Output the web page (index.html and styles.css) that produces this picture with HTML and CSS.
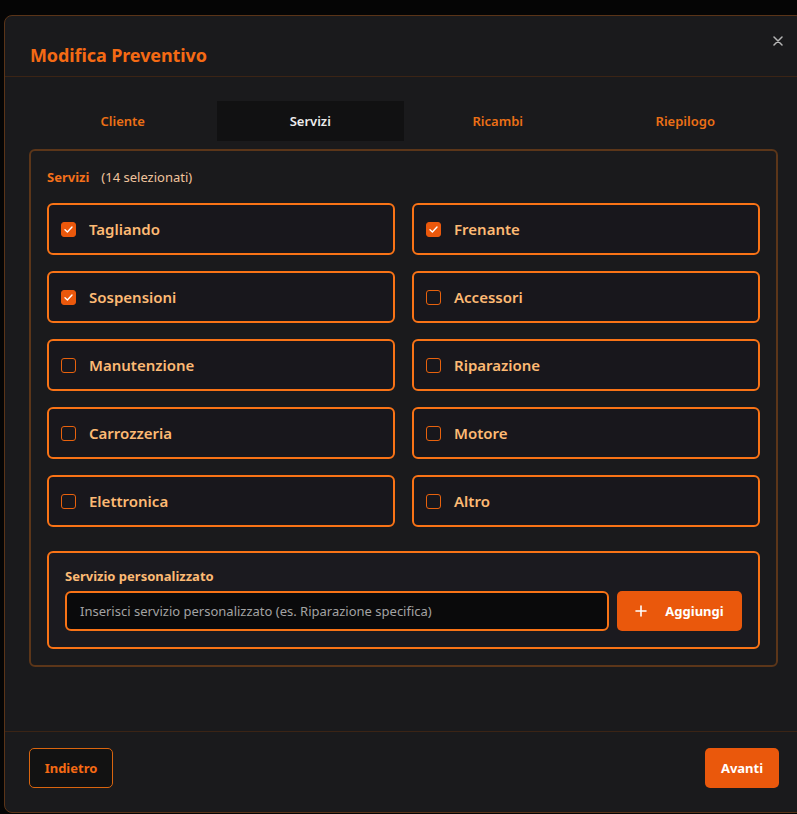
FILE: index.html
```html
<!DOCTYPE html>
<html lang="it">
<head>
<meta charset="utf-8">
<title>Modifica Preventivo</title>
<link rel="stylesheet" href="styles.css">
</head>
<body>
<div class="modal">
  <header class="modal-header">
    <h2 class="modal-title">Modifica Preventivo</h2>
    <button class="close-btn" aria-label="Chiudi">
      <svg width="10" height="10" viewBox="0 0 10 10"><path d="M1 1L9 9M9 1L1 9" stroke="#b5b5b5" stroke-width="1.5" stroke-linecap="round"/></svg>
    </button>
  </header>
  <div class="modal-body">
    <nav class="tabs">
      <div class="tab">Cliente</div>
      <div class="tab active">Servizi</div>
      <div class="tab">Ricambi</div>
      <div class="tab">Riepilogo</div>
    </nav>
    <section class="card">
      <div class="card-label"><span class="label-strong">Servizi</span><span class="label-count">(14 selezionati)</span></div>
      <div class="grid">
        <label class="item"><span class="cb checked"><svg width="11" height="11" viewBox="0 0 11 11"><path d="M2 5.8L4.4 8L9 3" fill="none" stroke="#fff" stroke-width="1.4" stroke-linecap="round" stroke-linejoin="round"/></svg></span>Tagliando</label>
        <label class="item"><span class="cb checked"><svg width="11" height="11" viewBox="0 0 11 11"><path d="M2 5.8L4.4 8L9 3" fill="none" stroke="#fff" stroke-width="1.4" stroke-linecap="round" stroke-linejoin="round"/></svg></span>Frenante</label>
        <label class="item"><span class="cb checked"><svg width="11" height="11" viewBox="0 0 11 11"><path d="M2 5.8L4.4 8L9 3" fill="none" stroke="#fff" stroke-width="1.4" stroke-linecap="round" stroke-linejoin="round"/></svg></span>Sospensioni</label>
        <label class="item"><span class="cb"></span>Accessori</label>
        <label class="item"><span class="cb"></span>Manutenzione</label>
        <label class="item"><span class="cb"></span>Riparazione</label>
        <label class="item"><span class="cb"></span>Carrozzeria</label>
        <label class="item"><span class="cb"></span>Motore</label>
        <label class="item"><span class="cb"></span>Elettronica</label>
        <label class="item"><span class="cb"></span>Altro</label>
      </div>
      <div class="custom">
        <div class="custom-label">Servizio personalizzato</div>
        <div class="custom-row">
          <div class="input">Inserisci servizio personalizzato (es. Riparazione specifica)</div>
          <button class="add-btn"><svg width="12" height="12" viewBox="0 0 12 12"><path d="M6 1V11M1 6H11" stroke="#fff" stroke-width="1.6" stroke-linecap="round"/></svg><span>Aggiungi</span></button>
        </div>
      </div>
    </section>
  </div>
  <footer class="modal-footer">
    <button class="btn-outline">Indietro</button>
    <button class="btn-primary">Avanti</button>
  </footer>
</div>
</body>
</html>
```
FILE: styles.css
```css
* { box-sizing: border-box; }
html, body { margin: 0; padding: 0; }
body {
  background: #050505;
  font-family: "Noto Sans", "Open Sans", sans-serif;
  overflow: hidden;
  height: 814px;
}
.modal {
  margin: 15px 0 0 4px;
  width: 800px;
  height: 798px;
  background: #1a1a1c;
  border: 1px solid #5a3418;
  border-radius: 8px;
  display: flex;
  flex-direction: column;
}
.modal-header {
  height: 61px;
  border-bottom: 1px solid #3b2415;
  display: flex;
  align-items: center;
  justify-content: space-between;
  padding: 0 20px 0 25px;
  position: relative;
}
.modal-title {
  margin: 0;
  margin-top: 17px;
  font-size: 18px;
  font-weight: 700;
  color: #f56a14;
  letter-spacing: -0.1px;
}
.close-btn {
  background: none;
  border: 0;
  padding: 0;
  width: 10px;
  height: 10px;
  align-self: flex-start;
  margin-top: 20px;
  display: flex;
}
.modal-body {
  flex: 1;
  padding: 24px 20px 0 24px;
}
.tabs {
  display: grid;
  grid-template-columns: repeat(4, 1fr);
  height: 40px;
  width: 750px;
}
.tab {
  display: flex;
  align-items: center;
  justify-content: center;
  font-size: 13px;
  font-weight: 600;
  color: #ec7016;
}
.tab.active {
  background: #111112;
  color: #ececec;
}
.card {
  margin-top: 8px;
  width: 749px;
  border: 2px solid #5c3619;
  border-radius: 6px;
  padding: 16px;
}
.card-label {
  height: 20px;
  display: flex;
  align-items: center;
  font-size: 13px;
}
.label-strong { color: #f4701a; font-weight: 700; }
.label-count { color: #f0c49c; margin-left: 12px; }
.grid {
  margin-top: 16px;
  display: grid;
  grid-template-columns: 1fr 1fr;
  gap: 16px 17px;
}
.item {
  height: 52px;
  border: 2px solid #f97316;
  border-radius: 6px;
  background: #18171c;
  display: flex;
  align-items: center;
  padding-left: 12px;
  gap: 13px;
  font-size: 15px;
  font-weight: 600;
  color: #fdba74;
}
.cb {
  width: 15px;
  height: 15px;
  border: 1px solid #e8620d;
  border-radius: 3px;
  display: flex;
  align-items: center;
  justify-content: center;
  flex: none;
}
.cb.checked { background: #ea580c; border-color: #ea580c; }
.custom {
  margin-top: 24px;
  border: 2px solid #f97316;
  border-radius: 6px;
  background: #1b1a1f;
  padding: 15px 16px 16px;
}
.custom-label {
  font-size: 13px;
  font-weight: 700;
  color: #fdba74;
  line-height: 16px;
}
.custom-row {
  margin-top: 7px;
  display: flex;
  gap: 8px;
}
.input {
  flex: 1;
  height: 40px;
  background: #0a0a0b;
  border: 2px solid #f97316;
  border-radius: 6px;
  display: flex;
  align-items: center;
  padding-left: 13px;
  font-size: 13px;
  color: #a3a3a3;
}
.add-btn {
  width: 125px;
  height: 40px;
  background: #ea580c;
  border: 0;
  border-radius: 5px;
  color: #fff;
  font-family: inherit;
  font-size: 13px;
  font-weight: 700;
  display: flex;
  align-items: center;
  justify-content: center;
  gap: 18px;
}
.modal-footer {
  height: 81px;
  border-top: 1px solid #3b2415;
  display: flex;
  justify-content: space-between;
  align-items: flex-start;
  padding: 16px 24px 0 24px;
}
.btn-outline, .btn-primary {
  height: 40px;
  font-family: inherit;
  font-size: 13px;
  font-weight: 700;
  border-radius: 5px;
}
.btn-outline {
  width: 84px;
  background: #121212;
  border: 1px solid #d9650f;
  color: #f56a14;
}
.btn-primary {
  width: 74px;
  background: #ea580c;
  border: 0;
  color: #fff;
}
```
